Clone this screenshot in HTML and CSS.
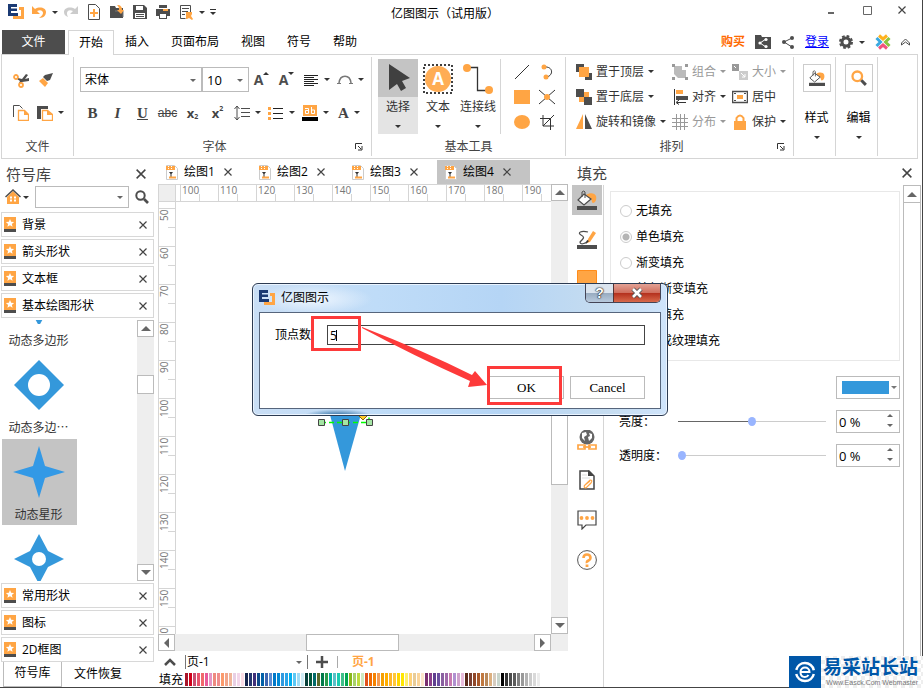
FILE: index.html
```html
<!DOCTYPE html>
<html lang="zh-CN">
<head>
    <meta charset="UTF-8">
    <meta name="viewport" content="width=device-width, initial-scale=1.0">
    <title>亿图图示</title>
    <link rel="stylesheet" href="styles.css">
</head>
<body>
<svg class="sprite" aria-hidden="true">
    <symbol id="logo" viewBox="0 0 16 16">
        <path fill="#1b3a73" d="M0 0h9v3H3v1.500h6v2.500H3v2h7v3H0z"/>
        <path fill="#ffa544" d="M11 3h5v12H5v-3h8V6h-2z"/>
    </symbol>
    <symbol id="x" viewBox="0 0 8 8"><path d="M0.500 0.500l7 7M7.500 0.500l-7 7" stroke="currentColor" stroke-width="1.200"/></symbol>
    <symbol id="star" viewBox="0 0 12 15">
        <path fill="#ffa544" d="M0 0h12v12H0z"/><path fill="#4d4d4d" d="M0 12h12v3H0z"/>
        <path fill="#fff" d="M6 2l1.200 2.800 2.900.2-2.200 1.900.7 2.900L6 8.200 3.400 9.800l.7-2.900L1.900 5l2.900-.2z"/>
    </symbol>
    <symbol id="doc" viewBox="0 0 12 15">
        <path d="M.5.5h8l3 3v11H.5z" fill="#fff" stroke="#ccc"/>
        <path fill="#ffa544" d="M0 1h9v4H0z"/><path stroke="#fff" d="M2.500 1v4M5.500 1v4" stroke-dasharray="1 1"/>
        <path fill="#333" d="M3 7h4L5.500 9v3h-1V9z"/><path d="M3 12.500h7" stroke="#ffa544" stroke-width="2"/>
    </symbol>
    <symbol id="bucket" viewBox="0 0 20 20">
        <path fill="#ffa544" d="M9 5c4-3 9-2 10 1 1 4-1 7-3 7-1 0-1-2-2-4z"/>
        <path fill="#fff" stroke="#4d4d4d" stroke-width="1.200" d="M7 4l7 5-7 6-6-5z"/>
        <path fill="none" stroke="#4d4d4d" d="M5 7V2q2-2 3 0v6"/>
        <path fill="#4d4d4d" d="M0 16h20v4H0z"/>
    </symbol>
    <symbol id="lens" viewBox="0 0 14 14">
        <circle cx="5.500" cy="5.500" r="4.200" fill="none" stroke="currentColor" stroke-width="2"/>
        <path d="M9 9l4 4" stroke="#4d4d4d" stroke-width="2.600"/>
    </symbol>
    <symbol id="launch" viewBox="0 0 8 8"><path d="M.5 6V.5H7M3 3l3 3M7 3v4H3" fill="none" stroke="#333"/></symbol>
</svg>

<div class="app">
    <!-- title bar -->
    <header class="titlebar">
        <div class="quick">
            <svg class="i16"><use href="#logo"/></svg>
            <button aria-label="撤销"><svg class="i16" viewBox="0 0 16 16"><path d="M1 2v8h8L6 7c4-2 6 0 6 2 0 1-1 3-4 5 5 0 7-3 7-6 0-4-6-6-11-3z" fill="#ffa544"/></svg></button>
            <i class="arr"></i>
            <button aria-label="恢复"><svg class="i16" viewBox="0 0 16 16"><path d="M15 2v8H7l3-3C6 5 4 7 4 9c0 1 0 2 1 4-3-1-4-3-4-5 0-4 6-6 11-3z" fill="#ccc"/></svg></button>
            <button aria-label="新建"><svg class="i16" viewBox="0 0 16 16"><path d="M2.500.5h7l4 4v11h-11z" fill="#fff" stroke="#4d4d4d"/><path d="M8 5v8M4 9h8" stroke="#ffa544" stroke-width="2"/></svg></button>
            <button aria-label="打开"><svg class="i16" viewBox="0 0 16 16"><path d="M1 2h5l1 2h7v10H1z" fill="#4d4d4d"/><path d="M6 7h8v6" fill="none" stroke="#777"/><path d="M8 1c4 0 5 2 5 5h2l-3 4-4-4h2c0-2 0-3-2-5z" fill="#ffa544"/></svg></button>
            <button aria-label="保存"><svg class="i16" viewBox="0 0 16 16"><path d="M1 1h11l3 3v11H1z" fill="#4d4d4d"/><path d="M4 2h7v4H4zM3 9h10v5H3z" fill="#fff"/><path d="M4 10.500h8M4 12.500h8" stroke="#4d4d4d"/></svg></button>
            <button aria-label="打印"><svg class="i16" viewBox="0 0 16 16"><path d="M4 1h8v3H4zM1 5h14v7H1zM4 9h8v6H4z" fill="#4d4d4d"/><path d="M5 10h6v4H5z" fill="#fff"/><path d="M8 5h5v2H8z" fill="#ffa544"/></svg></button>
            <button aria-label="预览"><svg class="i16" viewBox="0 0 16 16"><path d="M12.500 8V1.500h-10v13h5" fill="none" stroke="#4d4d4d"/><path d="M4 4.500h7M4 7.500h6M4 10.500h3" stroke="#4d4d4d"/><path d="M8 8h6v2l-1 2 2 3-1 1-3-2-2 1H8z" fill="#ffa544"/></svg></button>
            <i class="arr"></i>
            <button aria-label="自定义" class="more"><i class="arr"></i></button>
        </div>
        <h1>亿图图示（试用版）</h1>
        <div class="winbtns">
            <button aria-label="最小化"><svg class="i11" viewBox="0 0 11 11"><path d="M2 8h6" stroke="#666" stroke-width="2"/></svg></button>
            <button aria-label="最大化"><svg class="i11" viewBox="0 0 11 11"><path d="M1.500 1.500h8v8h-8z" fill="none" stroke="#666"/></svg></button>
            <button aria-label="关闭"><svg class="i8"><use href="#x"/></svg></button>
        </div>
    </header>

    <!-- ribbon tabs -->
    <nav class="tabs">
        <button class="file">文件</button>
        <button class="on">开始</button>
        <button>插入</button>
        <button>页面布局</button>
        <button>视图</button>
        <button>符号</button>
        <button>帮助</button>
        <div class="account">
            <a class="buy" href="#">购买</a>
            <svg class="i16" viewBox="0 0 16 16"><path d="M0 1h6l1 2h9v12H0z" fill="#4d4d4d"/><path d="M11 5L5 9l6 4" fill="none" stroke="#fff"/><circle cx="11" cy="5.500" r="1.600" fill="#fff"/><circle cx="5" cy="9" r="1.600" fill="#fff"/><circle cx="11" cy="12.500" r="1.600" fill="#fff"/></svg>
            <svg class="i14" viewBox="0 0 14 14"><path d="M11 3L3 7l8 5" fill="none" stroke="#4d4d4d"/><circle cx="11" cy="3" r="2" fill="#4d4d4d"/><circle cx="3" cy="7" r="2" fill="#4d4d4d"/><circle cx="11" cy="12" r="2" fill="#4d4d4d"/></svg>
            <a class="login" href="#">登录</a>
            <span class="gear"><svg class="i14" viewBox="0 0 14 14"><circle cx="7" cy="7" r="4" fill="none" stroke="#4d4d4d" stroke-width="3"/><circle cx="7" cy="7" r="6" fill="none" stroke="#4d4d4d" stroke-width="2" stroke-dasharray="2.700 2"/></svg><i class="arr"></i></span>
            <svg class="i16" viewBox="0 0 16 16" fill="none" stroke-width="3"><path d="M4 1.500l4 3.500 4-3.500" stroke="#ffb21d"/><path d="M4 14.500l4-3.500 4 3.500" stroke="#f2527d"/><path d="M1.500 4l4 4-4 4" stroke="#3aa9e0"/><path d="M14.500 4l-4 4 4 4" stroke="#8cc63f"/></svg>
            <svg class="i9" viewBox="0 0 9 9"><path d="M0.500 5L4.500 1l4 4v2l-4-3-4 3z" fill="none" stroke="#4d4d4d"/></svg>
        </div>
    </nav>

    <!-- ribbon -->
    <section class="ribbon">
        <div class="group g-file">
            <div class="body">
                <div class="row">
                    <button aria-label="剪切"><svg class="i16" viewBox="0 0 16 16"><path d="M5 6l4 1 4-5 2 1-3 4 4-1v3l-7 1-2 2-1-1 1-2-3-2z" fill="#4d4d4d"/><circle cx="3" cy="5" r="2" fill="none" stroke="#ffa544" stroke-width="1.800"/><circle cx="8" cy="13" r="2" fill="none" stroke="#ffa544" stroke-width="1.800"/></svg></button>
                    <button aria-label="格式刷"><svg class="i16" viewBox="0 0 16 16"><path d="M15 1l-3 7-3 1-4-4 2-2z" fill="#4d4d4d"/><path d="M5 6l5 5-3 4-6-6z" fill="#ffa544"/></svg></button>
                </div>
                <div class="row">
                    <button aria-label="复制"><svg class="i16" viewBox="0 0 16 16"><path d="M.5 12V.5h6l3 3" fill="none" stroke="#4d4d4d"/><path d="M5.500 5.500h6l4 4v6h-10z" fill="#fff" stroke="#ffa544" stroke-width="1.300"/><path d="M11 5v5h5z" fill="#ffa544"/></svg></button>
                    <button class="split" aria-label="粘贴"><svg class="i16" viewBox="0 0 16 16"><path d="M0 1h11v3H4v10H0z" fill="#4d4d4d"/><path d="M5.500 5.500h5l5 4v6h-10z" fill="#fff" stroke="#ffa544" stroke-width="1.300"/><path d="M10 5v5h6z" fill="#ffa544"/></svg><i class="arr"></i></button>
                </div>
            </div>
            <h2>文件</h2>
        </div>

        <div class="group g-font">
            <div class="body">
                <div class="row">
                    <span class="combo family"><select aria-label="字体"><option>宋体</option></select></span>
                    <span class="combo size"><select aria-label="字号"><option>10</option></select></span>
                    <button class="letter">A<i class="arr up"></i></button>
                    <button class="letter">A<i class="arr down"></i></button>
                    <button class="split" aria-label="对齐"><svg class="i16" viewBox="0 0 16 16"><path d="M1 3.500h14M1 5.500h10M1 7.500h14M1 9.500h10M1 11.500h14M1 13.500h10" stroke="#222"/></svg><i class="arr"></i></button>
                    <button class="split" aria-label="弧形"><svg class="i16" viewBox="0 0 16 16"><path d="M2 11c1-9 11-9 12 0" fill="none" stroke="#777" stroke-width="1.500"/><path d="M0 11.500h4M12 11.500h4" stroke="#777"/></svg><i class="arr"></i></button>
                </div>
                <div class="row">
                    <button class="fmt b">B</button>
                    <button class="fmt i">I</button>
                    <button class="fmt u">U</button>
                    <button class="fmt s">abc</button>
                    <button class="fmt x">x<sub>2</sub></button>
                    <button class="fmt x">x<sup>2</sup></button>
                    <button class="split" aria-label="行距"><svg class="i16" viewBox="0 0 16 16"><path d="M3 1v14M0.500 4L3 1l2.500 3M.5 12L3 15l2.500-3M7 3.500h9M7 7.500h9M7 11.500h9" fill="none" stroke="#4d4d4d"/></svg><i class="arr"></i></button>
                    <button class="split" aria-label="列表"><svg class="i16" viewBox="0 0 16 16"><path d="M0 2h3v3H0zM0 7h3v3H0zM0 12h3v3H0z" fill="#ffa544"/><path d="M5 3.500h10M5 8.500h10M5 13.500h10" stroke="#222"/></svg><i class="arr"></i></button>
                    <button class="split" aria-label="背景色"><svg class="i16" viewBox="0 0 16 16"><path d="M1 0h14v11H1z" fill="#ffa544"/><path d="M3 3.500h3.500v5H3.500v-3h3M9.500 2v6.500h3v-3.500h-3" fill="none" stroke="#fff"/><path d="M0 12h16v4H0z" fill="#000"/></svg><i class="arr"></i></button>
                    <button class="split fmt b">A<i class="arr"></i></button>
                </div>
            </div>
            <h2><span>字体</span><button aria-label="字体设置"><svg class="i8"><use href="#launch"/></svg></button></h2>
        </div>

        <div class="group g-tools">
            <div class="body">
                <button class="big on">
                    <svg viewBox="0 0 30 30"><path d="M6 0l21 14-8 3 4 7-5 3-4-7-8 6z" fill="#404040"/></svg>
                    <span>选择</span><i class="arr"></i>
                </button>
                <button class="big">
                    <svg viewBox="0 0 30 30"><rect x="1" y="1" width="28" height="28" fill="none" stroke="#404040" stroke-width="2" stroke-dasharray="2 2"/><circle cx="15" cy="15" r="13" fill="#ffad55"/><text x="15" y="21" text-anchor="middle">A</text></svg>
                    <span>文本</span><i class="arr"></i>
                </button>
                <button class="big">
                    <svg viewBox="0 0 30 30"><path d="M4 3.500h10.500v23H26" fill="none" stroke="#333" stroke-width="1.300"/><circle cx="4" cy="4" r="4" fill="#ffa544"/><circle cx="26" cy="26" r="4" fill="#ffa544"/></svg>
                    <span>连接线</span><i class="arr"></i>
                </button>
                <div class="draw">
                    <button aria-label="直线"><svg class="i16" viewBox="0 0 16 16"><path d="M1 15L15 1" stroke="#333"/></svg></button>
                    <button aria-label="弧线"><svg class="i16" viewBox="0 0 16 16"><path d="M5 3c9-1 10 8 3 10" fill="none" stroke="#333"/><circle cx="5" cy="3" r="2.500" fill="#ffa544"/><circle cx="7" cy="13" r="2.500" fill="#ffa544"/></svg></button>
                    <button aria-label="矩形"><svg class="i16" viewBox="0 0 16 16"><path d="M0 1h16v14H0z" fill="#ffa544"/></svg></button>
                    <button aria-label="交叉"><svg class="i16" viewBox="0 0 16 16"><path d="M0 1l16 14M16 1L0 15" stroke="#333"/><circle cx="8" cy="8" r="3" fill="#ffa544"/></svg></button>
                    <button aria-label="椭圆"><svg class="i16" viewBox="0 0 16 16"><ellipse cx="8" cy="8" rx="8" ry="7" fill="#ffa544"/></svg></button>
                    <button aria-label="裁剪"><svg class="i16" viewBox="0 0 16 16"><path d="M4 1v11h11M1 4.500h10.500V16M4 12L15 1" fill="none" stroke="#333"/></svg></button>
                </div>
            </div>
            <h2>基本工具</h2>
        </div>

        <div class="group g-arrange">
            <div class="body">
                <button><svg class="i16" viewBox="0 0 16 16"><path d="M0 0h8v8H0zM9 9h7v7H9z" fill="#4d4d4d"/><path d="M3 3h10v10H3z" fill="#ffa544"/></svg>置于顶层<i class="arr"></i></button>
                <button class="off"><svg class="i16" viewBox="0 0 16 16"><path d="M2 2h8v4h4v8H6l-4-4z" fill="#bbb"/><path d="M0 0h3v3H0zM13 0h3v3h-3zM0 13h3v3H0zM13 13h3v3h-3z" fill="#999"/></svg>组合<i class="arr"></i></button>
                <button class="off"><svg class="i16" viewBox="0 0 16 16"><path d="M0 0h7v7H0z" fill="#999"/><path d="M7 7h9v9H7z" fill="#ccc"/><path d="M2 2l2 2M9 9l4 4m0-3v3h-3" fill="none" stroke="#fff"/></svg>大小<i class="arr"></i></button>
                <button><svg class="i16" viewBox="0 0 16 16"><path d="M3 3h10v10H3z" fill="#ffa544"/><path d="M0 0h8v8H0zM8 8h8v8H8z" fill="#4d4d4d"/></svg>置于底层<i class="arr"></i></button>
                <button><svg class="i16" viewBox="0 0 16 16"><path d="M2.500 0v16M5 13.500h9M7 11l-3 2.500 3 2" fill="none" stroke="#333"/><path d="M4 1h7v4H4z" fill="#ffa544"/><path d="M4 7h12v4H4z" fill="#4d4d4d"/></svg>对齐<i class="arr"></i></button>
                <button><svg class="i16" viewBox="0 0 16 16"><path d="M.5 2.500h15v11H.5z" fill="none" stroke="#4d4d4d" stroke-width="1.500"/><path d="M5 6h6v4H5z" fill="#ffa544"/><path d="M2 4.500h2M12 4.500h2M2 11.500h2M12 11.500h2" stroke="#4d4d4d"/></svg>居中</button>
                <button><svg class="i16" viewBox="0 0 16 16"><path d="M7 0v15H0z" fill="#ffa544"/><path d="M9 0v15h7z" fill="#4d4d4d"/></svg>旋转和镜像<i class="arr"></i></button>
                <button class="off"><svg class="i16" viewBox="0 0 16 16"><path d="M4.500 0v16M8.500 0v16M12.500 0v16M0 4.500h16M0 8.500h16M0 12.500h16" stroke="#999"/></svg>分布<i class="arr"></i></button>
                <button><svg class="i16" viewBox="0 0 16 16"><path d="M2 7h12v9H2z" fill="#ffa544"/><path d="M4.500 8V4q3.500-5 7 0v4" fill="none" stroke="#ffa544" stroke-width="2"/></svg>保护<i class="arr"></i></button>
            </div>
            <h2><span>排列</span><button aria-label="排列设置"><svg class="i8"><use href="#launch"/></svg></button></h2>
        </div>

        <div class="group g-one"><button><span class="box"><svg class="i16"><use href="#bucket"/></svg></span>样式<i class="arr"></i></button></div>
        <div class="group g-one"><button><span class="box"><svg class="i16 orange"><use href="#lens"/></svg></span>编辑<i class="arr"></i></button></div>
    </section>

    <main class="work">
        <!-- symbol library -->
        <aside class="library">
            <div class="panel-head"><h3>符号库</h3><button aria-label="关闭"><svg class="i10"><use href="#x"/></svg></button></div>
            <div class="search">
                <button class="home" aria-label="主页"><svg class="i16" viewBox="0 0 16 16"><path d="M2 8l6-6 6 6v7H2z" fill="#ffa544"/><path d="M.5 8L8 1l7.500 7" fill="none" stroke="#4d4d4d" stroke-width="1.500"/><path d="M5 8.500h6M5 11.500h6" stroke="#fff" stroke-width="2" stroke-dasharray="2 2"/></svg><i class="arr"></i></button>
                <span class="combo"><select aria-label="搜索符号"><option></option></select></span>
                <button aria-label="搜索"><svg class="i14"><use href="#lens"/></svg></button>
            </div>
            <ul class="sets">
                <li><svg><use href="#star"/></svg>背景<button aria-label="关闭"><svg class="i8"><use href="#x"/></svg></button></li>
                <li><svg><use href="#star"/></svg>箭头形状<button aria-label="关闭"><svg class="i8"><use href="#x"/></svg></button></li>
                <li><svg><use href="#star"/></svg>文本框<button aria-label="关闭"><svg class="i8"><use href="#x"/></svg></button></li>
                <li><svg><use href="#star"/></svg>基本绘图形状<button aria-label="关闭"><svg class="i8"><use href="#x"/></svg></button></li>
            </ul>
            <div class="shapes">
                <div class="list">
                    <figure><svg viewBox="0 0 52 52"><path d="M4 14h44L26 54z" fill="#3498db"/></svg><figcaption>动态多边形</figcaption></figure>
                    <figure><svg viewBox="0 0 52 52"><path d="M26 1l25 25-25 25L1 26z" fill="#3498db"/><circle cx="26" cy="26" r="11" fill="#fff"/></svg><figcaption>动态多边⋯</figcaption></figure>
                    <figure class="on"><svg viewBox="0 0 52 52"><path d="M26 0l6 20 20 6-20 6-6 20-6-20-20-6 20-6z" fill="#3399e6"/></svg><figcaption>动态星形</figcaption></figure>
                    <figure><svg viewBox="0 0 52 52"><path d="M26 1l9 17 16 8-16 8-9 17-9-17-16-8 16-8z" fill="#3498db"/><circle cx="26" cy="26" r="7" fill="#fff"/></svg></figure>
                </div>
                <div class="vscroll lib-scroll"><button aria-label="向上"><i class="tri n"></i></button><i class="thumb"></i><button aria-label="向下"><i class="tri s"></i></button></div>
            </div>
            <ul class="sets">
                <li><svg><use href="#star"/></svg>常用形状<button aria-label="关闭"><svg class="i8"><use href="#x"/></svg></button></li>
                <li><svg><use href="#star"/></svg>图标<button aria-label="关闭"><svg class="i8"><use href="#x"/></svg></button></li>
                <li><svg><use href="#star"/></svg>2D框图<button aria-label="关闭"><svg class="i8"><use href="#x"/></svg></button></li>
            </ul>
            <div class="lib-tabs"><button class="on">符号库</button><button>文件恢复</button></div>
        </aside>

        <!-- drawing area -->
        <section class="editor">
            <div class="docs">
                <button><svg><use href="#doc"/></svg>绘图1<svg class="i8"><use href="#x"/></svg></button>
                <button><svg><use href="#doc"/></svg>绘图2<svg class="i8"><use href="#x"/></svg></button>
                <button><svg><use href="#doc"/></svg>绘图3<svg class="i8"><use href="#x"/></svg></button>
                <button class="on"><svg><use href="#doc"/></svg>绘图4<svg class="i8"><use href="#x"/></svg></button>
            </div>
            <div class="sheet">
                <div class="corner"></div>
                <div class="hruler" id="hruler"></div>
                <div class="vruler" id="vruler"></div>
                <div class="canvas">
                    <svg viewBox="0 0 375 432" width="375" height="432">
                        <path d="M150 198h39l-20 71z" fill="#3498db"/>
                        <path d="M145 220.500h48v-10" fill="none" stroke="#0f0" stroke-width="1.500" stroke-dasharray="5 3"/>
                        <path d="M187 210l4 4-4 4-4-4z" fill="#ffcb2e" stroke="#8a6d00"/>
                        <g fill="#a5e5a5" stroke="#444"><path d="M142.500 217.500h6v6h-6z"/><path d="M166.500 217.500h6v6h-6z"/><path d="M190.500 217.500h6v6h-6z"/></g>
                    </svg>
                </div>
                <div class="vscroll main-scroll"><button aria-label="向上"><i class="tri n"></i></button><i class="thumb"></i><button aria-label="向下"><i class="tri s"></i></button></div>
                <div class="hscroll"><button aria-label="向左"><i class="tri w"></i></button><i class="thumb"></i><button aria-label="向右"><i class="tri e"></i></button></div>
            </div>
            <div class="pages">
                <button aria-label="展开"><svg class="i12" viewBox="0 0 12 12"><path d="M1 9l5-5 5 5" fill="none" stroke="#4d4d4d" stroke-width="2.500"/></svg></button>
                <span class="combo"><select aria-label="页"><option>页-1</option></select></span>
                <button aria-label="新增页"><svg class="i12" viewBox="0 0 12 12"><path d="M6 0v12M0 6h12" stroke="#4d4d4d" stroke-width="2.500"/></svg></button>
                <button class="page">页-1</button>
            </div>
            <div class="palette"><span>填充</span><div id="swatches"></div></div>
        </section>

        <!-- fill panel -->
        <aside class="fill">
            <div class="panel-head"><h3>填充</h3><button aria-label="关闭"><svg class="i10"><use href="#x"/></svg></button></div>
            <div class="fill-body">
                <div class="side">
                    <button class="on" aria-label="填充"><svg><use href="#bucket"/></svg></button>
                    <button aria-label="线条"><svg viewBox="0 0 20 20"><path d="M11 2C4 0 0 3 4 5s3 3-1 7c0 3 5 2 8-1" fill="none" stroke="#4d4d4d" stroke-width="1.200"/><path d="M16 1l3 2-6 9-3 1 1-4z" fill="#ffa544"/><path d="M10 10l2 1-3 3z" fill="#333"/><path d="M0 15h20v4H0z" fill="#4d4d4d"/></svg></button>
                    <button aria-label="阴影"><svg viewBox="0 0 20 20"><path d="M.5.500h19v17H.5z" fill="#ffa544" stroke="#ff8c1a"/></svg></button>
                    <button aria-label="三维"></button>
                    <button aria-label="图片"></button>
                    <button aria-label="图层"></button>
                    <button aria-label="超链接"><svg viewBox="0 0 20 20"><circle cx="10" cy="7" r="7.500" fill="#666"/><path d="M5 3l4-1 1 3-3 2 1 4-3-3zM12 3l3 1v4l-3 3-1-4 2-1z" fill="#fff"/><path d="M1 15h7v4H1zM12 15h7v4h-7z" fill="#fff" stroke="#ffa544" stroke-width="1.700"/><path d="M6 17h8" stroke="#ffa544" stroke-width="1.700"/></svg></button>
                    <button aria-label="附件"><svg viewBox="0 0 20 20"><path d="M3 1h9l5 5v13H3z" fill="#fff" stroke="#444" stroke-width="1.500"/><path d="M11 0l6 6h-6z" fill="#444"/><path d="M5 5h5M5 8h8" stroke="#ddd"/><path d="M7 16l6-6q3 0 1 3l-5 5q-3 0-1-3l5-4" fill="none" stroke="#ffa544" stroke-width="1.200"/></svg></button>
                    <button aria-label="注释"><svg viewBox="0 0 20 20"><path d="M1 1h18v14H9l-4 4v-4H1z" fill="#fff" stroke="#444" stroke-width="1.200"/><circle cx="4.500" cy="8" r="1.900" fill="#ffa544"/><circle cx="10" cy="8" r="1.900" fill="#ffa544"/><circle cx="15.500" cy="8" r="1.900" fill="#ffa544"/></svg></button>
                    <button aria-label="帮助"><svg viewBox="0 0 20 20"><circle cx="10" cy="10" r="9.400" fill="#fff" stroke="#555"/><path d="M6.500 8q0-3.500 3.500-3.500T13.500 8q0 1.500-2 2.500T10 13" fill="none" stroke="#ffa544" stroke-width="2.600"/><path d="M8.600 14.500h2.800V17H8.600z" fill="#ffa544"/></svg></button>
                </div>
                <form class="options">
                    <div class="radios">
                        <label><input type="radio" name="fill">无填充</label>
                        <label><input type="radio" name="fill" checked>单色填充</label>
                        <label><input type="radio" name="fill">渐变填充</label>
                        <label><input type="radio" name="fill">单色渐变填充</label>
                        <label><input type="radio" name="fill">图案填充</label>
                        <label><input type="radio" name="fill">图片或纹理填充</label>
                    </div>
                    <div class="line"><button type="button" class="color" aria-label="颜色"><i></i><i class="arr"></i></button></div>
                    <div class="line"><label for="bright">亮度：</label><input class="half" id="bright" type="range" value="50"><span class="spin"><input type="text" aria-label="亮度值" value="0 %"></span></div>
                    <div class="line"><label for="alpha">透明度：</label><input id="alpha" type="range" value="0"><span class="spin"><input type="text" aria-label="透明度值" value="0 %"></span></div>
                </form>
                <div class="vscroll fill-scroll"><button aria-label="向上"><i class="tri n"></i></button></div>
            </div>
        </aside>
    </main>
</div>

<!-- dialog -->
<div class="dialog" role="dialog" aria-label="亿图图示">
    <div class="dlg-head">
        <svg class="i16"><use href="#logo"/></svg>
        <strong>亿图图示</strong>
        <div class="dlg-btns">
            <button class="q" aria-label="帮助">?</button>
            <button class="c" aria-label="关闭"><svg viewBox="0 0 14 12"><path d="M3 2l8 8M11 2l-8 8" stroke="#555" stroke-width="4.500"/><path d="M3 2l8 8M11 2l-8 8" stroke="#fff" stroke-width="2.600"/></svg></button>
        </div>
    </div>
    <div class="dlg-body">
        <div class="field"><label for="points">顶点数</label><input id="points" type="text" value="5"></div>
        <div class="actions"><button>OK</button><button>Cancel</button></div>
    </div>
    <svg class="marks" viewBox="0 0 416 133">
        <g fill="none" stroke="#fd3a3a" stroke-width="3"><path d="M60.500 34.500h47v32h-47z"/><path d="M236.500 84.500h72v36h-72z"/></g>
        <path fill="#fd3a3a" d="M110 44q60 23 110 48l3-4 12 14-19 2 2-6Q160 72 110 45z"/>
        <path d="M84.500 47v11" stroke="#000"/>
    </svg>
</div>

<!-- watermark -->
<div class="mark">
    <svg viewBox="0 0 32 32"><path d="M0 0h32v32H0z" fill="#0057a8"/><circle cx="16" cy="16" r="9" fill="none" stroke="#fff" stroke-width="2.500" stroke-dasharray="24 4.300" stroke-dashoffset="-2"/><path d="M11.500 16h9c0-6-9-6-9 0s6 6 8 3" fill="none" stroke="#fff" stroke-width="2"/></svg>
    <div><p>易采站长站</p><small>Www.Easck.Com Webmaster</small></div>
</div>
<script src="script.js"></script>
</body>
</html>
```
FILE: styles.css
```css
*{
    box-sizing: border-box;
}
body{
    margin: 0;
    height: 100vh;
    position: relative;
    overflow: hidden;
    background: #fff;
    color: #000;
    font: 12px/16px "Open Sans", "Noto Sans CJK SC", sans-serif;
}
button, select, input{
    font: inherit;
    color: inherit;
    margin: 0;
    padding: 0;
    border: 0;
    background: none;
}
h1, h2, h3, ul, figure, p{
    margin: 0;
    padding: 0;
    font-size: 12px;
    font-weight: normal;
    list-style: none;
}
svg{
    display: block;
    flex: none;
}
.sprite{
    display: none;
}
.i8{ width: 8px; height: 8px; color: #444; }
.i9{ width: 9px; height: 9px; }
.i10{ width: 10px; height: 10px; color: #444; }
.i11{ width: 11px; height: 11px; }
.i12{ width: 12px; height: 12px; }
.i14{ width: 14px; height: 14px; color: #4d4d4d; }
.i16{ width: 16px; height: 16px; }
.orange{ color: #ffa544; }
.arr{
    flex: none;
    border: 3px solid transparent;
    border-top-color: #333;
    border-bottom: 0;
}
.tri{
    border: 5px solid transparent;
}
.tri.n{ border-bottom-color: #666; border-top: 0; }
.tri.s{ border-top-color: #666; border-bottom: 0; }
.tri.w{ border-right-color: #666; border-left: 0; }
.tri.e{ border-left-color: #666; border-right: 0; }

.app{
    display: flex;
    flex-direction: column;
    height: 100%;
    border-right: 1px solid #444;
    border-bottom: 1px solid #444;
}

/* title bar */
.titlebar{
    display: grid;
    grid-template-columns: 1fr auto 1fr;
    height: 30px;
}
.titlebar h1{
    padding-top: 6px;
    margin-right: 32px;
}
.quick{
    display: flex;
    align-items: center;
    gap: 7px;
    height: 24px;
    padding-left: 8px;
}
.quick > .arr{
    margin: 0 -2px;
}
.more{
    display: flex;
    align-items: flex-end;
    width: 6px;
    height: 6px;
    border-top: 1px solid #333;
}
.winbtns{
    display: flex;
    justify-content: flex-end;
    align-items: center;
    gap: 25px;
    height: 20px;
    padding-right: 16px;
}

/* ribbon tabs */
.tabs{
    display: flex;
    height: 24px;
    padding-left: 2px;
}
.tabs > button{
    padding: 0 11px;
}
.tabs .file{
    width: 63px;
    margin-right: 3px;
    background: #4d4d4d;
    color: #fff;
}
.tabs .on{
    padding: 0 10px;
    border: 1px solid #d5d5d5;
    border-bottom: 0;
    margin-bottom: -1px;
    background: #fff;
    position: relative;
}
.account{
    display: flex;
    align-items: center;
    gap: 10px;
    margin-left: auto;
    padding-right: 12px;
}
.buy{
    color: #ff6a00;
    font-weight: bold;
    text-decoration: none;
}
.login{
    color: #00f;
}
.gear{
    display: flex;
    align-items: center;
    gap: 6px;
}

/* ribbon */
.ribbon{
    display: flex;
    height: 105px;
    margin: 0 4px 0 1px;
    padding: 2px 0;
    border: 1px solid #d5d5d5;
}
.group{
    display: flex;
    flex-direction: column;
    border-right: 1px solid #d5d5d5;
}
.group .body{
    flex: 1;
}
.group h2{
    display: flex;
    justify-content: center;
    align-items: center;
    height: 19px;
    color: #444;
}
.group h2 span{
    flex: 1;
    text-align: center;
}
.group h2 button{
    width: 16px;
}
.row{
    display: flex;
    align-items: center;
    height: 33px;
}
.row:first-child{
    margin-top: 6px;
}
.row button{
    display: flex;
    align-items: center;
    justify-content: center;
    width: 25px;
}
.row .split{
    width: 34px;
    gap: 5px;
}
.g-file{
    width: 72px;
    flex: none;
}
.g-file .row{
    padding-left: 6px;
}
.g-font{
    width: 298px;
    flex: none;
}
.g-font .row{
    padding-left: 6px;
}
.combo{
    position: relative;
    display: block;
    border: 1px solid #bbb;
}
.combo::after{
    content: "";
    position: absolute;
    right: 5px;
    top: 50%;
    margin-top: -1px;
    border: 3px solid transparent;
    border-top-color: #666;
    border-bottom: 0;
}
.combo select{
    appearance: none;
    display: block;
    width: 100%;
    height: 100%;
    padding-left: 4px;
}
.row .combo{
    height: 25px;
}
.family{
    width: 122px;
}
.row .size{
    width: 47px;
    font-size: 13px;
}
.letter{
    font: bold 14px/16px "Open Sans", sans-serif;
    color: #4d4d4d;
}
.letter .arr{
    align-self: flex-start;
}
.letter .up{
    transform: rotate(180deg);
}
.row .fmt{
    font: bold 15px/16px "Liberation Serif", serif;
    color: #444;
}
.row .i{ font-style: italic; }
.row .u{ text-decoration: underline; }
.row .s{
    font: 12px/16px "Liberation Sans", sans-serif;
    text-decoration: line-through;
}
.row .x{
    font: bold 13px/16px "Open Sans", sans-serif;
}
.fmt sub, .fmt sup{
    font-size: 7px;
    line-height: 8px;
}
.fmt sub{ align-self: flex-end; }
.fmt sup{ align-self: flex-start; }

.g-tools{
    width: 194px;
    flex: none;
}
.g-tools .body{
    display: flex;
    padding: 2px 0 0 6px;
}
.big{
    display: flex;
    flex-direction: column;
    align-items: center;
    width: 40px;
    height: 75px;
    padding-top: 5px;
    color: #333;
}
.big svg{
    width: 30px;
    height: 30px;
    margin-bottom: 5px;
}
.big text{
    font: bold 17px "Open Sans", sans-serif;
    fill: #fff;
}
.big span{
    white-space: nowrap;
}
.big .arr{
    margin-top: 10px;
}
.big.on{
    background: linear-gradient(#c4c4c4 38px, #e4e4e4 38px);
}
.draw{
    display: grid;
    grid-template-columns: 25px 25px;
    width: 60px;
    height: 75px;
    margin-left: 2px;
    padding-left: 8px;
    border-left: 1px solid #d5d5d5;
}
.draw button{
    display: grid;
    place-items: center;
}
.g-arrange{
    width: 228px;
    flex: none;
}
.g-arrange .body{
    display: grid;
    grid-template-columns: 96px 60px 60px;
    grid-template-rows: repeat(3, 25px);
    padding: 2px 0 0 10px;
}
.g-arrange .body button{
    display: flex;
    align-items: center;
    gap: 4px;
    color: #333;
    white-space: nowrap;
}
.g-arrange .body .off{
    color: #999;
}
.off .arr{
    border-top-color: #999;
}
.g-one{
    width: 42px;
    flex: none;
}
.g-one button{
    display: flex;
    flex-direction: column;
    align-items: center;
    padding: 7px 0 0 4px;
}
.box{
    display: grid;
    place-items: center;
    width: 28px;
    height: 28px;
    margin-bottom: 18px;
    border: 1px solid #ccc;
}
.g-one .arr{
    margin-top: 10px;
}

/* panels */
.work{
    flex: 1;
    display: flex;
    min-height: 0;
}
.panel-head{
    display: flex;
    align-items: center;
    justify-content: space-between;
    height: 27px;
    padding: 2px 12px 0 6px;
}
.panel-head h3{
    font-size: 15px;
    line-height: 20px;
    color: #444;
}
.vscroll{
    display: flex;
    flex-direction: column;
    width: 17px;
    background: #eee;
}
.vscroll button, .hscroll button{
    display: grid;
    place-items: center;
    flex: none;
    width: 17px;
    height: 17px;
    border: 1px solid #bbb;
    background: #fff;
}
.thumb{
    border: 1px solid #bbb;
    background: #fff;
}

/* symbol library */
.library{
    display: flex;
    flex-direction: column;
    width: 158px;
    flex: none;
}
.search{
    display: flex;
    align-items: center;
    height: 22px;
    margin-bottom: 4px;
    padding-left: 5px;
}
.search .home{
    display: flex;
    align-items: center;
    gap: 2px;
    width: 30px;
}
.search .combo{
    width: 94px;
    height: 22px;
    margin-right: 6px;
}
.sets{
    display: flex;
    flex-direction: column;
    gap: 2px;
    width: 154px;
    padding-left: 1px;
}
.sets li{
    display: flex;
    align-items: center;
    height: 25px;
    padding: 0 6px 0 2px;
    border: 1px solid #d8d8d8;
}
.sets li > svg{
    width: 12px;
    height: 15px;
    margin-right: 6px;
}
.sets button{
    margin-left: auto;
}
.shapes{
    flex: 1;
    display: flex;
    min-height: 0;
    overflow: hidden;
    margin: 2px 0;
}
.list{
    display: flex;
    flex-direction: column;
    gap: 1px;
    width: 135px;
    margin-top: -55px;
    margin-left: 2px;
}
.list figure{
    display: flex;
    flex-direction: column;
    align-items: center;
    justify-content: space-between;
    flex: none;
    width: 75px;
    height: 86px;
    padding: 7px 2px 2px 0;
    color: #333;
}
.list .on{
    background: #c4c4c4;
}
.list svg{
    width: 52px;
    height: 52px;
}
.lib-scroll .thumb{
    height: 19px;
    margin: 38px 0 auto;
}
.lib-tabs{
    display: flex;
    height: 25px;
    padding-left: 3px;
}
.lib-tabs button{
    width: 72px;
    padding-bottom: 2px;
    white-space: nowrap;
}
.lib-tabs .on{
    width: 59px;
    border: 1px solid #bbb;
    border-top: 0;
}

/* drawing area */
.editor{
    flex: 1;
    min-width: 0;
    display: flex;
    flex-direction: column;
}
.docs{
    display: flex;
    height: 25px;
    padding-top: 1px;
}
.docs button{
    display: flex;
    align-items: center;
    gap: 6px;
    width: 93px;
    padding-left: 8px;
}
.docs button > svg:first-child{
    width: 12px;
    height: 15px;
}
.docs .i8{
    margin-left: 3px;
}
.docs .on{
    background: #c4c4c4;
}
.sheet{
    flex: 1;
    min-height: 0;
    display: grid;
    grid-template: 18px 1fr 17px / 18px 1fr 17px;
}
.corner{
    background: #eee;
    border: 1px solid #d5d5d5;
}
.hruler, .vruler{
    display: flex;
    overflow: hidden;
    font-size: 10px;
    color: #777;
}
.hruler b, .vruler b{
    display: block;
    font-weight: normal;
    line-height: 11px;
}
.hruler{
    padding-left: 4px;
    border: 1px solid #d5d5d5;
    border-width: 1px 0;
}
.vruler{
    flex-direction: column;
    padding-top: 6px;
    border: 1px solid #d5d5d5;
    border-width: 0 1px;
}
.hruler span{
    flex: none;
    width: 38px;
    padding-left: 1px;
    border-left: 1px solid #d5d5d5;
    background: linear-gradient(#d5d5d5, #d5d5d5) 18px 100% / 1px 7px no-repeat;
}
.vruler span{
    flex: none;
    display: flex;
    height: 38px;
    border-top: 1px solid #d5d5d5;
    background: linear-gradient(#d5d5d5, #d5d5d5) 100% 18px / 7px 1px no-repeat;
}
.vruler b{
    writing-mode: vertical-rl;
    transform: rotate(180deg);
    text-align: right;
    padding-bottom: 1px;
}
.canvas{
    overflow: hidden;
}
.main-scroll{
    grid-area: 1 / 3 / 3 / 4;
}
.main-scroll .thumb{
    height: 140px;
    margin: auto 0 132px;
}
.hscroll{
    grid-area: 3 / 1 / 4 / 4;
    display: flex;
    padding-right: 17px;
    background: #eee;
}
.hscroll .thumb{
    width: 93px;
    margin: 0 auto 0 131px;
}
.pages{
    display: flex;
    align-items: center;
    height: 21px;
    padding-left: 6px;
}
.pages .combo{
    width: 123px;
    height: 14px;
    margin: 0 8px 0 9px;
    border: 1px solid #777;
    border-width: 0 1px;
}
.pages select{
    padding-left: 1px;
    line-height: 14px;
}
.pages .page{
    margin-left: 9px;
    padding-left: 14px;
    border-left: 1px solid #aaa;
    line-height: 12px;
    color: #ffa544;
    font-weight: bold;
}
.palette{
    display: flex;
    align-items: center;
    height: 15px;
}
.palette span{
    width: 27px;
    padding-left: 1px;
}
.palette div{
    display: flex;
    gap: 1px;
}
.palette i{
    width: 3px;
    height: 13px;
}

/* fill panel */
.fill{
    display: flex;
    flex-direction: column;
    width: 354px;
    flex: none;
    padding-left: 4px;
}
.fill .panel-head{
    height: 26px;
    padding: 2px 10px 0 5px;
}
.fill-body{
    flex: 1;
    display: flex;
    min-height: 0;
    padding-right: 1px;
}
.side{
    display: flex;
    flex-direction: column;
    gap: 10px;
    width: 32px;
    border-right: 1px solid #d5d5d5;
}
.side button{
    display: grid;
    place-items: center;
    width: 30px;
    height: 30px;
}
.side .on{
    background: #c4c4c4;
}
.side svg{
    width: 20px;
    height: 20px;
}
.options{
    flex: 1;
    display: flex;
    flex-direction: column;
    gap: 11px;
    padding: 6px 3px 0 6px;
}
.radios{
    height: 170px;
    margin-bottom: 4px;
    padding: 6px 9px;
    border: 1px solid #e8e8e8;
}
.radios label{
    display: flex;
    align-items: center;
    gap: 4px;
    height: 26px;
}
.radios input{
    appearance: none;
    width: 12px;
    height: 12px;
    border: 1px solid #ccc;
    border-radius: 50%;
}
.radios input:checked{
    background: radial-gradient(#b5b5b5 3px, #fff 4px);
}
.line{
    display: flex;
    align-items: center;
    height: 23px;
    padding-left: 9px;
}
.line label{
    width: 59px;
}
.line > :last-child{
    margin-left: auto;
}
.color{
    display: flex;
    align-items: center;
    gap: 2px;
    width: 64px;
    height: 23px;
    padding-left: 5px;
    border: 1px solid #bbb;
}
.color i:first-child{
    width: 47px;
    height: 13px;
    background: #3498db;
}
.color .arr{
    border-top-color: #777;
}
.line input[type=range]{
    appearance: none;
    width: 148px;
    height: 9px;
    background: linear-gradient(#ccc, #ccc) 0 4px / 100% 1px no-repeat;
}
.line .half{
    background: linear-gradient(90deg, #666 50%, #ccc 50%) 0 4px / 100% 1px no-repeat !important;
}
.line input::-webkit-slider-thumb{
    appearance: none;
    width: 8px;
    height: 9px;
    border-radius: 50%;
    background: #99b5ff;
}
.spin{
    position: relative;
    width: 64px;
    height: 23px;
    border: 1px solid #bbb;
}
.spin input{
    display: block;
    width: 44px;
    height: 21px;
    padding-left: 2px;
    font-size: 13px;
}
.spin::before, .spin::after{
    content: "";
    position: absolute;
    right: 6px;
    border: 3px solid transparent;
}
.spin::before{
    top: 3px;
    border-top: 0;
    border-bottom-color: #666;
}
.spin::after{
    bottom: 5px;
    border-bottom: 0;
    border-top-color: #666;
}
.fill-scroll{
    width: 18px;
    border: 1px solid #bbb;
    border-width: 0 1px;
    background: #fff;
}
.fill-scroll button{
    width: 16px;
    height: 18px;
    border-width: 1px 0;
}

/* dialog */
.dialog{
    position: absolute;
    left: 252px;
    top: 283px;
    width: 416px;
    height: 133px;
    padding: 0 6px 6px;
    border: 1px solid #2c3b52;
    border-radius: 6px;
    background:
        radial-gradient(ellipse at 50% 100%, #1d5f96, transparent 70%) 50px 125px / 70px 7px no-repeat,
        radial-gradient(ellipse, #eef6ff, transparent 70%) 0 0 / 120px 30px no-repeat,
        linear-gradient(90deg, #c9def5, #bfdcf8 30%, #b5d5f5 60%, #c5dcf0 85%, #cfe4fb);
    box-shadow: inset 0 0 0 1px #eaf4ff;
}
.dlg-head{
    display: flex;
    align-items: center;
    height: 28px;
    gap: 6px;
}
.dlg-head strong{
    font-weight: normal;
}
.dlg-btns{
    display: flex;
    align-self: flex-start;
    margin-left: auto;
    height: 19px;
    border: 1px solid #445;
    border-top: 0;
    border-radius: 0 0 5px 5px;
    overflow: hidden;
}
.dlg-btns .q{
    width: 27px;
    font: bold 14px/18px "Liberation Sans", sans-serif;
    color: #fff;
    text-shadow: 0 0 1px #222, 0 0 1px #222, 0 0 2px #222;
    background: linear-gradient(#dbe4ee 50%, #97aabf 50%, #b8cadd);
}
.dlg-btns .c{
    display: grid;
    place-items: center;
    width: 47px;
    border-left: 1px solid #533;
    background: linear-gradient(#e3a295, #cf6d5c 50%, #b32f1c 50%, #d8694b);
}
.c svg{
    width: 14px;
    height: 12px;
}
.dlg-body{
    height: 97px;
    padding: 12px 15px 0;
    border: 1px solid #56657c;
    background: #fff;
}
.field{
    display: flex;
    align-items: center;
    justify-content: space-between;
}
.field input{
    width: 318px;
    height: 20px;
    padding-left: 2px;
    border: 1px solid #444;
}
.actions{
    display: flex;
    justify-content: flex-end;
    gap: 6px;
    margin-top: 31px;
}
.actions button{
    width: 75px;
    height: 23px;
    border: 1px solid #bbb;
    font: 13px/16px "Liberation Serif", serif;
}
.marks{
    position: absolute;
    left: -1px;
    top: -1px;
    width: 416px;
    height: 133px;
    pointer-events: none;
}

/* watermark */
.mark{
    position: absolute;
    right: 0;
    bottom: 0;
    display: flex;
    gap: 2px;
    width: 134px;
    height: 32px;
    background: repeating-conic-gradient(#eee 0 25%, #fff 0 50%) 0 0 / 8px 8px;
}
.mark > svg{
    width: 32px;
    height: 32px;
}
.mark div{
    display: flex;
    flex-direction: column;
    align-items: flex-end;
}
.mark p{
    font-size: 19px;
    line-height: 23px;
    font-weight: bold;
    color: #0057a8;
    white-space: nowrap;
}
.mark small{
    font: 7px/8px "Liberation Sans", sans-serif;
    color: #777;
}
```
FILE: script.js
```js
// palette
var colors = [
    "#a8152b","#d0021b","#c94f72","#e8536b","#f0686c","#e85a9a","#e596c5","#ee8a80","#f08c8c","#fb9a6c","#f2a58a","#f0b59a","#e8cfe4","#f3d6ea","#fbdde6",
    "#17264d","#25366e","#40307a","#0f4a8a","#0060a8","#3d66b0","#5a8ad0","#0078c8","#0088d4","#2f9ae0","#2aa4e8","#00aeef","#5ac8f5","#9fdcf5","#d0ecf5",
    "#06403a","#00573a","#006a6a","#5a6a2a","#007a4a","#2a9a4a","#00b0a0","#5abfc8","#1accb0","#3fc08a","#00a651","#8ab81a","#a8d06a","#bfdc40","#cfe8c0",
    "#e0521a","#f06a00","#f58200","#f59a50","#f5a000","#ffae00","#ffb52a","#ffc63a","#ffd500","#ffe600","#fff06a","#ffd27a","#e8cc98","#fbd59a","#fde6cc",
    "#7a3070","#8a3f8a","#5f3f90","#6a4fa0","#8a60a0","#a06aaa","#c87ab0","#b090d0","#cfa0cc","#e8bcdc",
    "#5a2a1a","#7a3f30","#90482a","#a8582a","#c0783f","#b8885a","#dcb080","#d5ccc0","#c8d5cc",
    "#000000","#333333","#4d4d4d","#5c5c5c","#808080","#999999","#b3b3b3","#cccccc","#d9d9d9","#ececec"
]
var swatches = document.getElementById("swatches")
colors.forEach(function(c){
    var i = document.createElement("i")
    i.style.backgroundColor = c
    swatches.appendChild(i)
})

// rulers
function ruler(id, from, to){
    var el = document.getElementById(id)
    for(var n = from; n <= to; n += 10){
        el.innerHTML += "<span><b>" + n + "</b></span>"
    }
}
ruler("hruler", 100, 190)
ruler("vruler", 50, 160)
```
